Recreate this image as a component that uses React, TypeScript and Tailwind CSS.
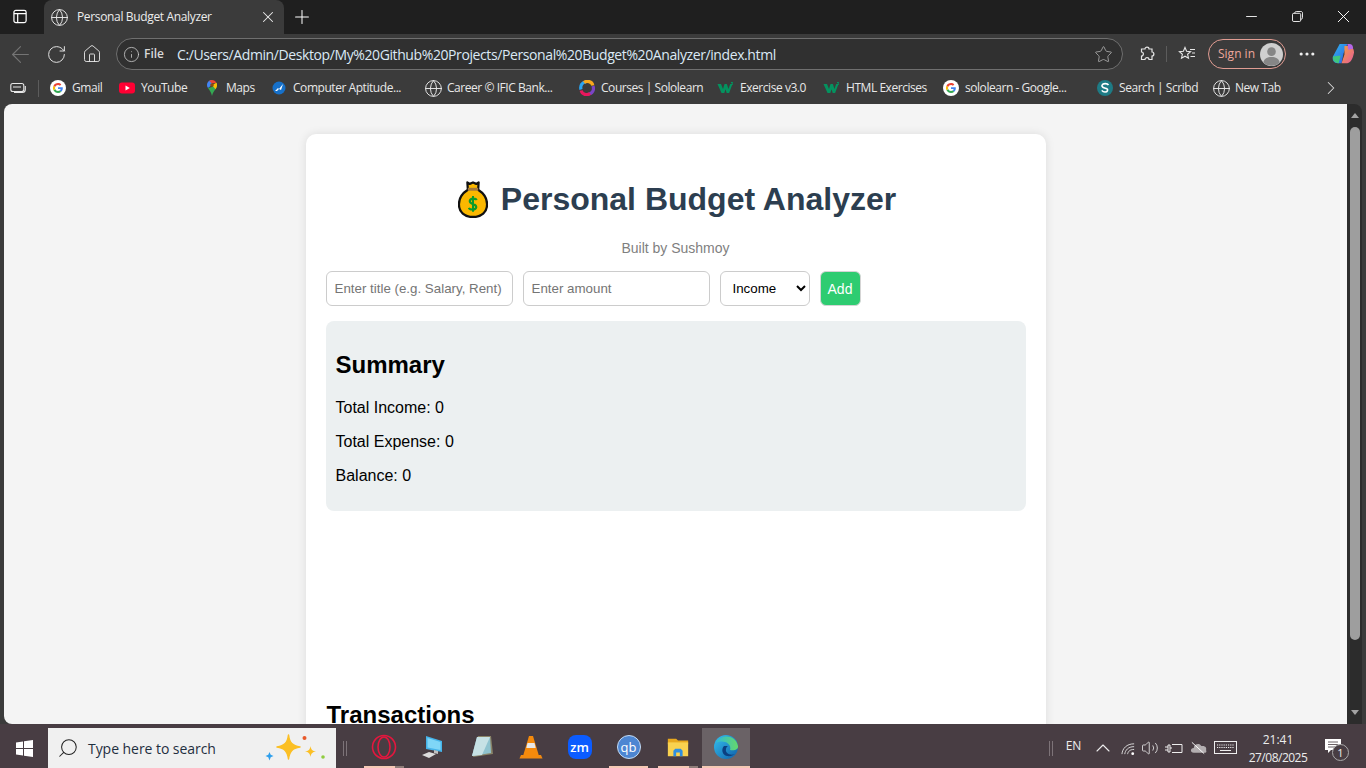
import { ChevronRight, ChevronUp, Ellipsis, Home, Info, Plus, RotateCw, Search, Star, X, ArrowLeft, Volume2, Globe, Minus } from 'lucide-react'

const ui = 'font-["Open_Sans","Noto_Sans",sans-serif]'

function GlobeIcon() {
  return <Globe className="-mx-[1.5px] h-[19px] w-[19px] text-[#e8e8e8]" strokeWidth={1.2} />
}

function GoogleIcon() {
  return (
    <svg viewBox="0 0 16 16" className="h-4 w-4">
      <circle cx="8" cy="8" r="8" fill="#fff" />
      <path d="M12.8 8.2c0-.4 0-.7-.1-1H8v1.9h2.7c-.1.6-.5 1.2-1 1.5l1.6 1.2c.9-.9 1.5-2.1 1.5-3.6z" fill="#4285f4" />
      <path d="M8 13c1.3 0 2.4-.4 3.3-1.2l-1.6-1.2c-.4.3-1 .5-1.7.5-1.3 0-2.4-.9-2.8-2L3.5 10.300C4.300 11.900 6 13 8 13z" fill="#34a853" />
      <path d="M5.200 9.100c-.2-.7-.2-1.500 0-2.200L3.500 5.700c-.7 1.400-.7 3.200 0 4.600z" fill="#fbbc05" />
      <path d="M8 5c.8 0 1.400.3 1.900.8l1.400-1.400C10.400 3.500 9.300 3 8 3 6 3 4.300 4.100 3.500 5.700l1.700 1.200C5.600 5.800 6.700 5 8 5z" fill="#ea4335" />
    </svg>
  )
}

function YouTubeIcon() {
  return (
    <svg viewBox="0 0 16 16" className="h-4 w-4">
      <rect x="0" y="2.500" width="16" height="11" rx="3" fill="#ff0033" />
      <path d="M6.500 5.500 10.800 8l-4.300 2.500z" fill="#fff" />
    </svg>
  )
}

function MapsIcon() {
  return (
    <svg viewBox="0 0 16 16" className="h-4 w-4">
      <path d="M8 0C5 0 3 2.300 3 5c0 1.200.4 2.200 1 3l4-3z" fill="#4285f4" />
      <path d="M8 0c-1 0-2 .3-2.800 .9L8 3.500 12.500 2.800C11.600 1.100 10 0 8 0z" fill="#ea4335" />
      <path d="M13 5c0-.8-.2-1.500-.5-2.200L8 7l-4 1c1.200 2 3.200 3.800 4 8 .7-3.500 2.300-5.300 3.500-6.800.9-1.200 1.500-2.500 1.500-4.200z" fill="#34a853" />
      <path d="M12.500 2.800C12.800 3.500 13 4.200 13 5c0 1.700-.6 3-1.500 4.200L8 5z" fill="#fbbc05" />
      <circle cx="8" cy="5" r="1.800" fill="#8a4b10" />
    </svg>
  )
}

function AptitudeIcon() {
  return (
    <svg viewBox="0 0 16 16" className="h-4 w-4">
      <circle cx="8" cy="8" r="6.500" fill="#1670c9" />
      <path d="M4 11 7 8l1 1 4-5-2 6-2-1-2 2z" fill="#fff" />
    </svg>
  )
}

function SololearnIcon() {
  return (
    <svg viewBox="0 0 16 16" className="h-4 w-4" fill="none" strokeWidth="3.200">
      <path d="M2 9.500C.9 5.500 3.500 1.800 7 2" stroke="#2aa5f2" />
      <path d="M5 2.500C8 .2 13 1.500 13.800 5.500" stroke="#f8a81b" />
      <path d="M14 6C15.500 10 13 14 9.500 14" stroke="#7a45c6" />
      <path d="M11 13.500C8 15.800 3 14.500 2.200 10.500" stroke="#e8175d" />
      <circle cx="8" cy="8" r="2" fill="#3a3a3a" stroke="none" />
    </svg>
  )
}

function W3Icon() {
  return (
    <svg viewBox="0 0 16 16" className="h-4 w-[17px]">
      <path d="M0 4h3.500l2 5 1.500-5h2.400l1.500 5 1.800-5H15l-3.400 9H9.200L8 9.200 6.800 13H4z" fill="#04925f" />
      <path d="M13.500 2h2v.6l-.8.7h.8v1.500h-2v-.6h1.300v-.4h-.8v-.5h.8v-.4h-1.300z" fill="#04925f" />
    </svg>
  )
}

function ScribdIcon() {
  return (
    <svg viewBox="0 0 16 16" className="h-4 w-4">
      <circle cx="8" cy="8" r="8" fill="#1e7b85" />
      <path d="M11.500 5C10.500 3.300 6 3 5 5.300 4.300 7.500 8 8 9.500 8.600c2 .9 1.200 3.400-1.500 3.400-1.300 0-2.500-.6-3.200-1.600" fill="none" stroke="#fff" strokeWidth="1.600" />
    </svg>
  )
}

function CopilotIcon() {
  return (
    <svg viewBox="0 0 24 24" className="h-[23px] w-[23px]">
      <defs>
        <linearGradient id="cpa" x1="0" y1="0" x2="1" y2="1">
          <stop offset="0" stopColor="#2fb8ef" />
          <stop offset="1" stopColor="#2f5de0" />
        </linearGradient>
        <linearGradient id="cpb" x1="0" y1="0" x2="1" y2="1">
          <stop offset="0" stopColor="#f4a13c" />
          <stop offset="1" stopColor="#e55a9b" />
        </linearGradient>
      </defs>
      <path d="M8 1h8l-4 10-2 10H6C2 21 0 18 1 14z" fill="url(#cpa)" />
      <path d="M1 14c-.5 3 1 7 6 7l2-8z" fill="#3fc77f" />
      <path d="M13 3h5c3 0 5 3 5 7-1 5-3 11-7 11h-6l3-9z" fill="url(#cpb)" />
      <path d="M16 1h2c3 0 4 2 4 5l-5 1z" fill="#b566e6" />
    </svg>
  )
}

function MoneyBag() {
  return (
    <svg viewBox="0 0 32 38" className="h-[37px] w-[30px]" preserveAspectRatio="none">
      <path d="M10 1.500l2.500 1.500L16 1.500 19.500 3 22 1.500 21.500 9C28 13 31 18 31 24c0 8-6 13-15 13S1 32 1 24C1 18 4 13 10.500 9z" fill="#fbb800" stroke="#111" strokeWidth="2.400" strokeLinejoin="round" />
      <rect x="10.500" y="7" width="11" height="3" fill="#a5793a" />
      <path d="M20 19.500c-1-2-7-2-7.500 1-.5 4 7.500 2.500 7 6.500-.5 3-7 3-8 .5M16 15.500v16" fill="none" stroke="#0c9b2a" strokeWidth="2.200" />
    </svg>
  )
}

const bookmarks = [
  { label: 'Gmail', icon: <GoogleIcon />, w: 'w-[69px]' },
  { label: 'YouTube', icon: <YouTubeIcon />, w: 'w-[85px]' },
  { label: 'Maps', icon: <MapsIcon />, w: 'w-[67px]' },
  { label: 'Computer Aptitude...', icon: <AptitudeIcon />, w: 'w-[154px]' },
  { label: 'Career © IFIC Bank...', icon: <GlobeIcon />, w: 'w-[154px]' },
  { label: 'Courses | Sololearn', icon: <SololearnIcon />, w: 'w-[138px]' },
  { label: 'Exercise v3.0', icon: <W3Icon />, w: 'w-[106px]' },
  { label: 'HTML Exercises', icon: <W3Icon />, w: 'w-[120px]' },
  { label: 'sololearn - Google...', icon: <GoogleIcon />, w: 'w-[154px]' },
  { label: 'Search | Scribd', icon: <ScribdIcon />, w: 'w-[116px]' },
  { label: 'New Tab', icon: <GlobeIcon />, w: 'w-[100px]' },
]

function TabStrip() {
  return (
    <div className="flex h-[34px] shrink-0 bg-[#1f1f1f]">
      <div className="flex w-[44px] items-center justify-center pb-[1px] pr-[4px]">
        <svg viewBox="0 0 16 16" className="h-[15px] w-[15px] text-white" fill="none" stroke="currentColor" strokeWidth="1.300">
          <rect x="1" y="1.500" width="13" height="13" rx="2" />
          <path d="M1 5h13M5 5v9" />
        </svg>
      </div>
      <div className="flex h-[34px] w-[240px] items-center rounded-t-lg bg-[#3b3b3b] pl-[7px] pr-[7px]">
        <GlobeIcon />
        <span className="ml-[10px] flex-1 text-[12px] tracking-[-0.35px] text-[#ececec]">Personal Budget Analyzer</span>
        <X className="h-[18px] w-[18px] text-[#ececec]" strokeWidth={1.4} />
      </div>
      <div className="ml-[7px] flex items-center">
        <Plus className="h-[22px] w-[22px] text-white" strokeWidth={1.1} />
      </div>
      <div className="ml-auto flex items-center pb-[1px] text-white">
        <div className="flex w-[46px] justify-center"><Minus className="h-[17px] w-[17px]" strokeWidth={1.25} /></div>
        <div className="flex w-[46px] justify-center">
          <svg viewBox="0 0 12 12" className="h-[11px] w-[11px]" fill="none" stroke="currentColor">
            <rect x=".5" y="2.500" width="9" height="9" rx="1.500" />
            <path d="M3 2.500c0-1 .6-2 1.700-2h5c1 0 1.800.8 1.800 1.800v5c0 1-.8 1.700-2 1.700" />
          </svg>
        </div>
        <div className="flex w-[46px] justify-center"><X className="h-[21px] w-[21px]" strokeWidth={1.1} /></div>
      </div>
    </div>
  )
}

function Toolbar() {
  return (
    <div className="flex h-[38px] shrink-0 items-center bg-[#3b3b3b] pb-[1px] pt-[3px] text-[#e6e6e6]">
      <div className="flex w-[40px] justify-center"><ArrowLeft className="h-[27px] w-[27px] text-[#747474]" strokeWidth={1} /></div>
      <div className="flex w-[32px] justify-center"><RotateCw className="h-[21px] w-[21px]" strokeWidth={1.1} /></div>
      <div className="flex w-[40px] justify-center"><Home className="h-[20px] w-[20px]" strokeWidth={1.1} /></div>
      <div className="ml-[4px] flex h-[32px] w-[1007px] items-center rounded-full border border-[#6f6f6f] bg-[#303030] pl-[6px] pr-[9px]">
        <Info className="h-[17px] w-[17px] text-[#cfcfcf]" strokeWidth={1.1} />
        <span className="ml-[4px] text-[12px] font-semibold text-[#d8d8d8]">File</span>
        <span className="ml-[13px] flex-1 text-[14px] tracking-[-0.4px] text-[#dbe9f5]">C:/Users/Admin/Desktop/My%20Github%20Projects/Personal%20Budget%20Analyzer/index.html</span>
        <Star className="h-[19px] w-[19px] text-[#a8a8a8]" strokeWidth={1.1} />
      </div>
      <div className="ml-[14px] flex w-[20px] justify-center">
        <svg viewBox="0 0 16 16" className="h-[16px] w-[16px]" fill="none" stroke="currentColor" strokeWidth="1.200">
          <path d="M6 3c0-2.500 4-2.500 4 0h3v3c2.500 0 2.500 4 0 4v3.500H10c0-2.500-4-2.500-4 0H2.500V10c2.500 0 2.500-4 0-4V3z" />
        </svg>
      </div>
      <div className="ml-[9px] h-[16px] w-px bg-[#5c5c5c]" />
      <div className="ml-[10px] flex w-[20px] justify-center">
        <svg viewBox="0 0 18 18" className="h-[18px] w-[18px]" fill="none" stroke="currentColor" strokeWidth="1.100">
          <path d="M7 2.500 8.600 6.200 12.600 6.600 9.600 9.300 10.500 13.200 7 11.200 3.500 13.200 4.400 9.300 1.400 6.600 5.400 6.200z" />
          <path d="M12 4.500h5M14 8h3M12.500 11.500H17" />
        </svg>
      </div>
      <div className="ml-[11px] flex h-[30px] w-[78px] items-center justify-between rounded-full border border-[#e09c92] pl-[9px] pr-[2px]">
        <span className="text-[12px] text-[#eda79c]">Sign in</span>
        <svg viewBox="0 0 24 24" className="h-[23px] w-[23px]">
          <circle cx="12" cy="12" r="12" fill="#cfcfcf" />
          <circle cx="12" cy="9" r="4.500" fill="#868686" />
          <path d="M3.500 20c1-4 4-5.500 8.500-5.500S19.500 16 20.500 20c-4 5-13 5-17 0z" fill="#868686" />
        </svg>
      </div>
      <div className="ml-[9px] flex w-[24px] justify-center"><Ellipsis className="h-[20px] w-[20px] text-[#efefef]" strokeWidth={1.8} /></div>
      <div className="ml-[13px] flex"><CopilotIcon /></div>
    </div>
  )
}

function BookmarksBar() {
  return (
    <div className="flex h-[32px] shrink-0 items-center bg-[#3b3b3b] text-[#e8e8e8]">
      <div className="flex w-[38px] justify-center pr-[2px]">
        <svg viewBox="0 0 16 16" className="h-[16px] w-[16px]" fill="none" stroke="currentColor" strokeWidth="1.100">
          <rect x=".8" y="3.500" width="13" height="8" rx="2" />
          <path d="M3 7h8M15.300 6v3.500c0 2-1 3-3 3H4" />
        </svg>
      </div>
      <div className="h-[17px] w-px bg-[#5c5c5c]" />
      <div className="ml-[11px] flex">
        {bookmarks.map(b => (
          <div key={b.label + b.w} className={`flex items-center ${b.w}`}>
            {b.icon}
            <span className="ml-[6px] whitespace-nowrap text-[12px] tracking-[-0.45px]">{b.label}</span>
          </div>
        ))}
      </div>
      <ChevronRight className="ml-[7px] h-[22px] w-[22px] text-[#dcdcdc]" strokeWidth={1.1} />
    </div>
  )
}

function Page() {
  return (
    <main className='flex-1 overflow-hidden rounded-tl-lg rounded-bl-lg bg-[#f4f4f4] font-["Liberation_Sans",Arial,sans-serif] leading-[normal]'>
      <div className="mx-auto mt-[30px] h-[700px] w-[740px] rounded-[10px] bg-white px-[20px] pt-[47px] shadow-[0_0_10px_rgba(0,0,0,0.1)]">
        <h1 className="flex h-[37px] items-center justify-center gap-[13px] pl-[3px] text-[32px] font-bold text-[#2c3e50]">
          <MoneyBag />
          Personal Budget Analyzer
        </h1>
        <p className="mt-[22px] text-center text-[14px] text-[#7f7f7f]">Built by Sushmoy</p>
        <div className="mt-[15px] flex h-[35px] gap-[10px]">
          <input
            placeholder="Enter title (e.g. Salary, Rent)"
            className="w-[187px] rounded-[6px] border border-[#ccc] bg-white px-[8px] text-[13.33px] placeholder:text-[#757575]"
          />
          <input
            placeholder="Enter amount"
            className="w-[187px] rounded-[6px] border border-[#ccc] bg-white px-[8px] text-[13.33px] placeholder:text-[#757575]"
          />
          <select defaultValue="Income" className="w-[90px] appearance-auto rounded-[6px] border border-[#ccc] bg-white px-[8px] text-[13.33px] text-black">
            <option>Income</option>
            <option>Expense</option>
          </select>
          <button className="w-[41px] rounded-[6px] border border-[#d5d5d5] bg-[#2ecc71] text-[14px] text-white">Add</button>
        </div>
        <section className="mt-[15px] rounded-[8px] bg-[#ecf0f1] p-[10px] text-black">
          <h2 className="my-[20px] text-[24px] font-bold">Summary</h2>
          <p className="my-[16px] text-[16px]">Total Income: 0</p>
          <p className="my-[16px] text-[16px]">Total Expense: 0</p>
          <p className="mt-[16px] text-[16px] mb-[16px]">Balance: 0</p>
        </section>
        <h2 className="mt-[190px] pl-[1px] text-[24px] font-bold text-black">Transactions</h2>
      </div>
    </main>
  )
}

function Scrollbar() {
  return (
    <div className="flex w-[15px] shrink-0 flex-col items-center rounded-tr-lg bg-[#2c2c2c] pt-[9px]">
      <div className="h-0 w-0 border-x-[4px] border-b-[5px] border-x-transparent border-b-[#a3a3a3]" />
      <div className="mt-[9px] h-[513px] w-[10px] rounded-full bg-[#9e9e9e]" />
      <div className="mt-auto mb-[9px] h-0 w-0 border-x-[4px] border-t-[5px] border-x-transparent border-t-[#a3a3a3]" />
    </div>
  )
}

const taskApps = [
  {
    id: 'opera', bar: 'w-[31px] bg-[#f5c9b5]', extra: 'w-[9px] bg-[#8f7d79]',
    icon: (
      <svg viewBox="0 0 26 26" className="h-[26px] w-[26px]" fill="none" stroke="#e3173e" strokeWidth="1.600">
        <circle cx="13" cy="13" r="11.500" />
        <ellipse cx="13" cy="13" rx="6" ry="10" />
      </svg>
    ),
  },
  {
    id: 'pc', bar: '', extra: '',
    icon: (
      <svg viewBox="0 0 26 26" className="h-[26px] w-[26px]">
        <path d="M6 2 22 7v11L6 15z" fill="#45b4ea" />
        <path d="M7.500 4 20.500 8v8L7.500 13.500z" fill="#7fd6f7" />
        <path d="M2 21l7-3 7 2-7 4z" fill="#dcdcdc" />
        <path d="M14 16l4 1v3l-4-1z" fill="#bfbfbf" />
      </svg>
    ),
  },
  {
    id: 'notes', bar: '', extra: '',
    icon: (
      <svg viewBox="0 0 26 26" className="h-[26px] w-[26px]">
        <path d="M9 2h13l2 18-20 3z" fill="#8a8468" />
        <path d="M8 3h13l1 16-19 3z" fill="#8fc3cf" />
        <path d="M8 3h13l-8 18-10 1z" fill="#c6e1e5" />
      </svg>
    ),
  },
  {
    id: 'vlc', bar: '', extra: '',
    icon: (
      <svg viewBox="0 0 26 26" className="h-[26px] w-[26px]">
        <path d="M3 21h20l1.500 3.500h-23z" fill="#f28a10" />
        <path d="M11 2h4l6 20H5z" fill="#f58a0c" />
        <path d="M9.500 9h7l1.200 5H8.300z" fill="#e8e8e8" />
      </svg>
    ),
  },
  {
    id: 'zm', bar: '', extra: '',
    icon: (
      <div className="flex h-[24px] w-[24px] items-center justify-center rounded-[8px] bg-[#0b5cff] text-[13px] font-semibold leading-none text-white">zm</div>
    ),
  },
  {
    id: 'qb', bar: 'w-[39px] bg-[#f5c9b5]', extra: '',
    icon: (
      <div className="flex h-[24px] w-[24px] items-center justify-center rounded-full border border-[#c5dcf4] bg-[#4d86d2] text-[13px] leading-none text-white">qb</div>
    ),
  },
  {
    id: 'folder', bar: 'w-[31px] bg-[#f5c9b5]', extra: 'w-[9px] bg-[#8f7d79]',
    icon: (
      <svg viewBox="0 0 26 26" className="h-[24px] w-[24px]">
        <path d="M2 4h9l2 2h11v4H2z" fill="#e8a91e" />
        <rect x="2" y="8" width="22" height="15" fill="#f9d24f" />
        <path d="M8 23v-6l2-2h6l2 2v6h-3v-4h-4v4z" fill="#2f8fe0" />
      </svg>
    ),
  },
]

function Tray() {
  return (
    <div className="ml-auto mt-[4px] flex items-center text-[#ededed]">
      <div className="flex w-[9px] gap-[2px]">
        <div className="h-[15px] w-px bg-[#7d7378]" />
        <div className="h-[15px] w-px bg-[#7d7378]" />
      </div>
      <div className="flex w-[31px] justify-center pb-[4px] text-[12px]">EN</div>
      <div className="flex w-[28px] justify-center"><ChevronUp className="h-[24px] w-[24px]" strokeWidth={1.1} /></div>
      <div className="flex w-[22px] justify-center">
        <svg viewBox="0 0 16 16" className="h-[15px] w-[15px]" fill="none" stroke="#ddd" strokeWidth="1">
          <path d="M1 14C1.500 8 6 3 14 3M4 14c.5-4 3.500-8 10-8M7 14c.5-2.500 2-5 7-5" />
          <circle cx="12.500" cy="13.500" r="1.500" fill="#fff" stroke="none" />
        </svg>
      </div>
      <div className="flex w-[22px] justify-center"><Volume2 className="h-[18px] w-[18px]" strokeWidth={1.1} /></div>
      <div className="flex w-[26px] justify-center">
        <svg viewBox="0 0 18 12" className="h-[12px] w-[18px]" fill="none" stroke="#eee" strokeWidth="1">
          <path d="M0 5h3M0 8h3M3 3h2v7H3zM5 6h2M7 2.500h10v8H7" />
        </svg>
      </div>
      <div className="flex w-[22px] justify-center">
        <svg viewBox="0 0 18 14" className="h-[14px] w-[17px]">
          <path d="M4 12C0 12 0 7 4 7c0-4 6-6 8-2 4-1 6 2 5 4 1 2 0 3-2 3z" fill="#b3aeb0" />
          <path d="M2 1 15 13" stroke="#fff" strokeWidth="1" />
        </svg>
      </div>
      <div className="flex w-[33px] justify-center">
        <svg viewBox="0 0 24 14" className="h-[14px] w-[24px]" fill="none" stroke="#eee" strokeWidth="1">
          <rect x=".5" y=".5" width="22" height="12" />
          <path d="M3 4h17M3 6.500h17" strokeDasharray="1.200 1" />
          <path d="M6 9.500h11" />
        </svg>
      </div>
      <div className="flex w-[72px] flex-col items-center pt-[1px] text-[12px] leading-[18px]">
        <span>21:41</span>
        <span className="tracking-[-0.5px]">27/08/2025</span>
      </div>
      <div className="relative mr-[14px] flex w-[38px] justify-center">
        <svg viewBox="0 0 16 14" className="mb-[5px] h-[14px] w-[16px]" fill="#fff">
          <path d="M0 0h16v11H6l-3 3v-3H0z" />
          <path d="M3 3h10M3 5.500h10M3 8h7" stroke="#6b6266" strokeWidth="1" />
        </svg>
        <span className="absolute bottom-[-3px] right-[3px] flex h-[17px] w-[17px] items-center justify-center rounded-full border border-[#aaa] bg-[#483d43] text-[11px] leading-none">1</span>
      </div>
    </div>
  )
}

function Taskbar() {
  return (
    <footer className={`flex h-[44px] shrink-0 bg-[#483d43] ${ui} text-white`}>
      <div className="flex w-[48px] items-center justify-center pt-[4px]">
        <svg viewBox="0 0 17 17" className="h-[17px] w-[17px]" fill="#fff">
          <path d="M0 2.400 7 1.400V8H0zM8 1.300 17 0v8H8zM0 9h7v6.600L0 14.600zM8 9h9v8L8 15.700z" />
        </svg>
      </div>
      <div className="mt-[4px] flex h-[40px] w-[288px] items-center bg-[#f0f0f0] pl-[9px] text-[#1f2f3f]">
        <Search className="h-[22px] w-[22px] -scale-x-100 text-[#222]" strokeWidth={1.1} />
        <span className="ml-[9px] flex-1 text-[14px] tracking-[-0.05px]">Type here to search</span>
        <svg viewBox="0 0 62 28" className="mr-[9px] h-[28px] w-[62px]">
          <path d="M23.500 1c1 8 4 11 11.500 12-7.500 1-10.500 4-11.500 12-1-8-4-11-11.500-12 7.500-1 10.500-4 11.500-12z" fill="#fbbf24" stroke="#fbbf24" strokeWidth="1.500" strokeLinejoin="round" />
          <path d="M45.500 12c.5 3.500 2 5 5.500 5.500-3.500.5-5 2-5.500 5.500-.5-3.500-2-5-5.500-5.500 3.500-.5 5-2 5.500-5.500z" fill="#fbbf24" />
          <path d="M4.500 18l1.200 2.800L8.500 22l-2.800 1.200-1.200 3.300-1.200-3.300L.5 22l2.800-1.200z" fill="#2e9fec" />
          <circle cx="39.500" cy="4" r="2" fill="#e8592a" />
          <circle cx="58" cy="23" r="1.800" fill="#8fcc3f" />
        </svg>
      </div>
      <div className="ml-[7px] mt-[4px] flex w-[16px] items-center gap-[2px]">
        <div className="h-[15px] w-px bg-[#7d7378]" />
        <div className="h-[15px] w-px bg-[#7d7378]" />
      </div>
      <div className="mt-[4px] flex">
        {taskApps.map(a => (
          <div key={a.id} className="flex w-[49px] flex-col items-center justify-between">
            <div className="flex flex-1 items-center justify-center">{a.icon}</div>
            <div className="flex h-[2px] w-[40px]">
              {a.bar && <div className={a.bar} />}
              {a.extra && <div className={a.extra} />}
            </div>
          </div>
        ))}
        <div className="flex w-[48px] flex-col items-center justify-between bg-[#6a6266]">
          <div className="flex flex-1 items-center justify-center">
            <svg viewBox="0 0 26 26" className="h-[26px] w-[26px]">
              <defs>
                <linearGradient id="edgeA" x1="0" y1="0" x2="1" y2="1">
                  <stop offset="0" stopColor="#35c1f1" />
                  <stop offset="1" stopColor="#0f5fa8" />
                </linearGradient>
                <linearGradient id="edgeB" x1="0" y1="0" x2="1" y2="0">
                  <stop offset="0" stopColor="#2fbbd6" />
                  <stop offset="1" stopColor="#66d86a" />
                </linearGradient>
              </defs>
              <circle cx="13" cy="13" r="12" fill="url(#edgeA)" />
              <path d="M3 9C6 1 22-1 25 12c.5 4-4 5-8 4 2-6-6-11-14-7z" fill="url(#edgeB)" />
              <path d="M11 12c-3 3-2 9 3 10 3 .6 6-.5 8-2-5 2-10-1-9-5 .2-1.300 1-2.500 2-3z" fill="#0b3f80" />
            </svg>
          </div>
          <div className="h-[2px] w-full bg-[#f5c9b5]" />
        </div>
      </div>
      <Tray />
    </footer>
  )
}

export default function App() {
  return (
    <div className={`flex h-screen w-full flex-col overflow-hidden bg-[#3b3b3b] ${ui}`}>
      <TabStrip />
      <Toolbar />
      <BookmarksBar />
      <div className="flex min-h-0 flex-1 pl-[4px] pr-[4px]">
        <Page />
        <Scrollbar />
      </div>
      <Taskbar />
    </div>
  )
}
